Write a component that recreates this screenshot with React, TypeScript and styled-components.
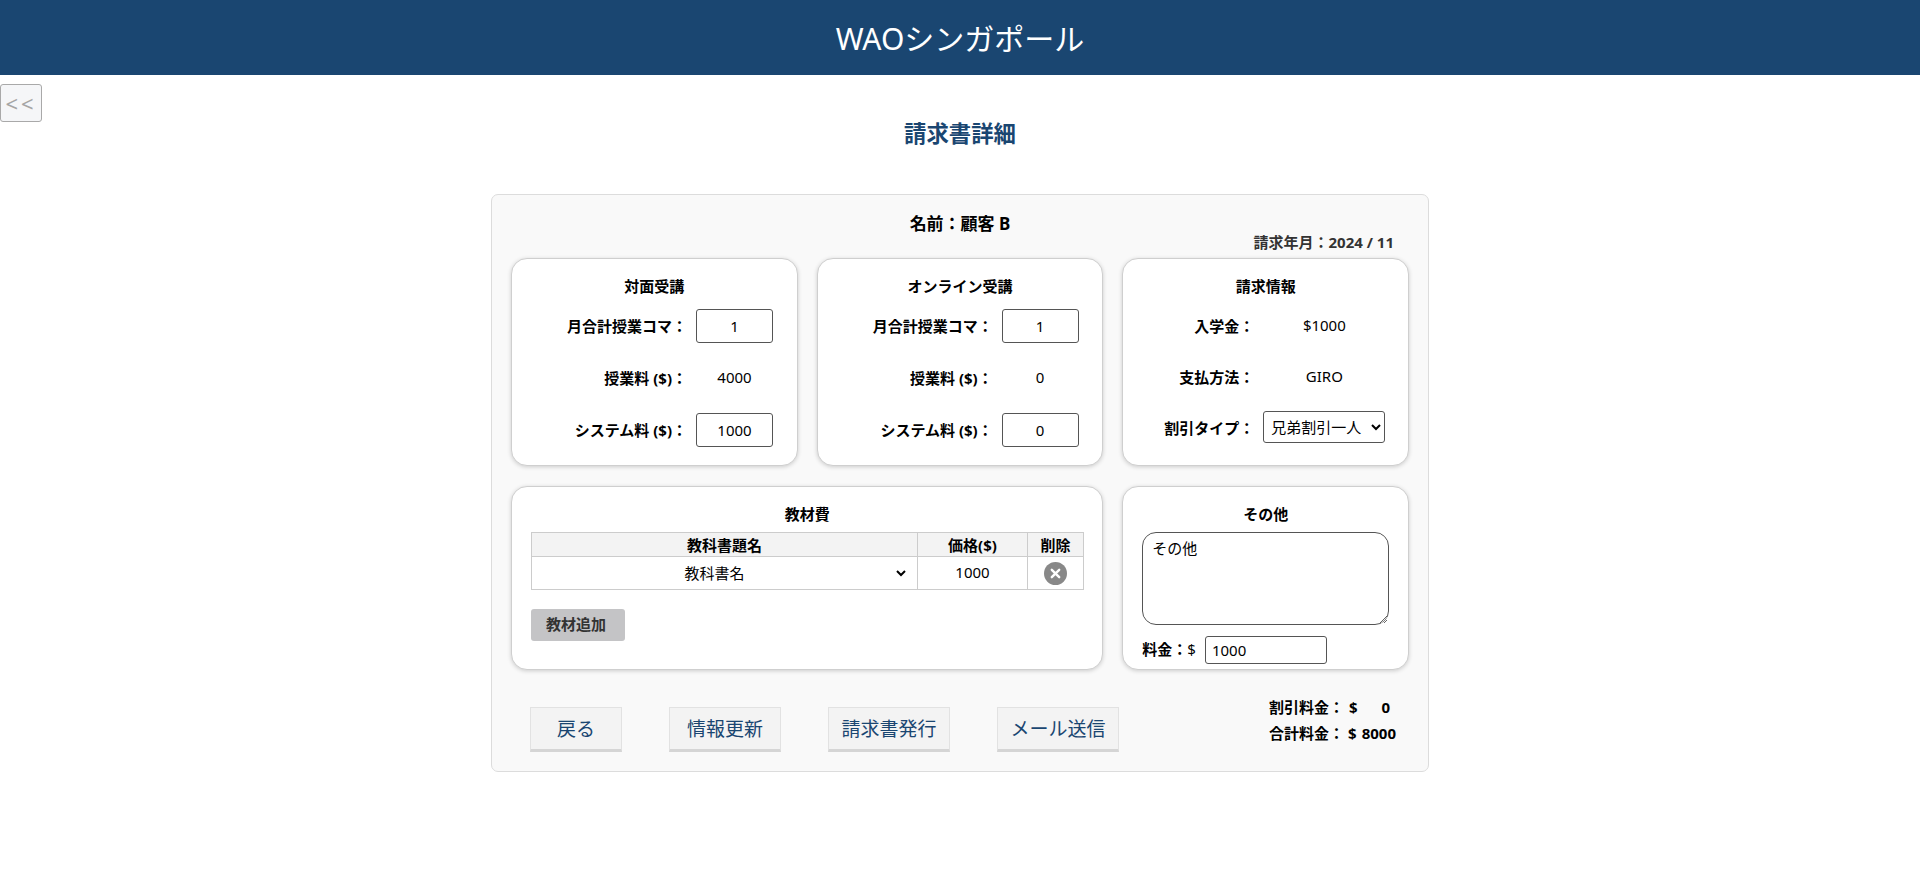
import styled, { createGlobalStyle } from 'styled-components';

const GlobalStyle = createGlobalStyle`
  * {
    box-sizing: border-box;
  }
  body {
    margin: 0;
    background: #fff;
    color: #000;
    font-family: "Noto Sans", "Noto Sans CJK JP", sans-serif;
    font-size: 15px;
  }
  input, select, textarea, button {
    font-family: "Noto Sans", "Noto Sans CJK JP", sans-serif;
  }
`;

const Header = styled.header`
  height: 75px;
  background: #1a4671;
  color: #fff;
  font-size: 30px;
  line-height: 77px;
  text-align: center;
`;

const BackButton = styled.button`
  display: block;
  width: 42px;
  height: 38px;
  margin-top: 9px;
  padding: 0;
  background: #f5f6f8;
  border: 1px solid #a9a9a9;
  border-radius: 3px;
  color: #a5a5a5;
  font-size: 22px;
  letter-spacing: 3px;
`;

const PageTitle = styled.h1`
  margin: 0 0 48px;
  color: #1a4671;
  font-size: 22.4px;
  font-weight: 700;
  line-height: 24px;
  text-align: center;
`;

const Panel = styled.section`
  width: 938px;
  margin: 0 auto;
  padding: 20px 19px 19px;
  background: #f9f9f9;
  border: 1px solid #dcdcdc;
  border-radius: 7px;
`;

const CustomerName = styled.div`
  font-size: 17px;
  font-weight: 700;
  line-height: 18px;
  text-align: center;
`;

const BillingMonth = styled.div`
  margin-bottom: 7px;
  padding-right: 15px;
  color: #333;
  font-weight: 700;
  line-height: 18px;
  text-align: right;
`;

const CardGrid = styled.div`
  display: grid;
  grid-template-columns: repeat(3, minmax(0, 1fr));
  grid-auto-rows: 208px 184px;
  gap: 20px 19px;
`;

const Card = styled.div<{ $span?: number }>`
  grid-column: span ${(p) => p.$span ?? 1};
  padding: 17px 19px 0;
  background: #fff;
  border: 1px solid #cfcfcf;
  border-radius: 16px;
  box-shadow: 0 1px 4px rgba(0, 0, 0, 0.18);
`;

const CardTitle = styled.h3<{ $gap: number }>`
  margin: 0 0 ${(p) => p.$gap}px;
  font-size: 15px;
  font-weight: 700;
  line-height: 20px;
  text-align: center;
`;

const FieldList = styled.div<{ $gap: number }>`
  display: flex;
  flex-direction: column;
  gap: ${(p) => p.$gap}px;
`;

const Field = styled.div<{ $labelWidth: number; $controlWidth: number }>`
  display: grid;
  grid-template-columns: ${(p) => p.$labelWidth}px ${(p) => p.$controlWidth}px;
  column-gap: 9px;
  align-items: center;
  height: 34px;
`;

const FieldLabel = styled.label`
  padding-bottom: 2px;
  font-weight: 700;
  text-align: right;
  white-space: nowrap;
`;

const FieldValue = styled.span`
  padding-bottom: 2px;
  text-align: center;
`;

const NumberInput = styled.input`
  width: 100%;
  height: 34px;
  padding: 0 4px;
  background: #fff;
  border: 1px solid #555;
  border-radius: 3px;
  color: #000;
  font-size: 15px;
  text-align: center;
`;

const DiscountSelect = styled.select`
  width: 122px;
  height: 32px;
  margin-bottom: 2px;
  padding: 0 2px 0 3px;
  background: #fff;
  border: 1px solid #555;
  border-radius: 3px;
  color: #000;
  font-size: 15px;
`;

const BookTable = styled.table`
  width: 552px;
  border-collapse: collapse;
  table-layout: fixed;
  line-height: 20px;

  th,
  td {
    padding: 0;
    border: 1px solid #ccc;
    text-align: center;
  }
  th {
    height: 24px;
    background: #f3f3f3;
    font-size: 15px;
    font-weight: 700;
  }
  td {
    height: 33px;
  }
  td.price {
    padding-bottom: 3px;
  }
`;

const BookSelect = styled.select`
  display: block;
  width: calc(100% - 8px);
  height: 30px;
  padding: 0;
  background: #fff;
  border: none;
  color: #000;
  font-size: 15px;
  text-align: center;
`;

const DeleteIcon = styled.svg`
  display: block;
  width: 23px;
  height: 23px;
  margin: 1px auto 0;
`;

const AddButton = styled.button`
  display: block;
  width: 94px;
  height: 32px;
  margin-top: 19px;
  padding: 0 0 3px 15px;
  background: #c4c4c6;
  border: none;
  border-radius: 3px;
  color: #333;
  font-size: 15px;
  font-weight: 700;
  text-align: left;
`;

const NoteArea = styled.textarea`
  display: block;
  width: 247px;
  height: 93px;
  margin: 0 0 11px;
  padding: 5px 9px;
  background: #fff;
  border: 1px solid #555;
  border-radius: 14px;
  color: #000;
  font-size: 15px;
  line-height: 20px;
`;

const FeeRow = styled.div`
  display: flex;
  align-items: center;
  gap: 9px;
  line-height: 20px;
`;

const FeeLabel = styled.label`
  padding-bottom: 3px;
  font-weight: 700;

  span {
    font-weight: 400;
  }
`;

const FeeInput = styled.input`
  width: 122px;
  height: 28px;
  padding: 0 6px;
  background: #fff;
  border: 1px solid #555;
  border-radius: 3px;
  color: #000;
  font-size: 15px;
`;

const Footer = styled.div`
  display: flex;
  justify-content: space-between;
  align-items: flex-start;
  margin-top: 27px;
  padding: 0 13px 0 19px;
`;

const Actions = styled.div`
  display: flex;
  gap: 47px;
  margin-top: 10px;
`;

const ActionButton = styled.button<{ $width: number }>`
  width: ${(p) => p.$width}px;
  height: 45px;
  padding: 0 0 2px;
  background: #f3f3f3;
  border: 1px solid #e2e2e2;
  border-bottom: 3px solid #d5d5d5;
  color: #1a4671;
  font-size: 19px;
`;

const Totals = styled.div`
  display: flex;
  flex-direction: column;
  gap: 6px;
  font-weight: 700;
  line-height: 20px;
`;

const TotalRow = styled.div`
  display: flex;
  width: 127px;
`;

const TotalLabel = styled.span`
  width: 80px;
  white-space: nowrap;
`;

const TotalAmount = styled.span<{ $indent: number }>`
  margin-left: ${(p) => p.$indent}px;
`;

const App = () => {
  return (
    <>
      <GlobalStyle />
      <Header>WAOシンガポール</Header>
      <BackButton>&lt;&lt;</BackButton>
      <PageTitle>請求書詳細</PageTitle>
      <Panel>
        <CustomerName>名前：顧客 B</CustomerName>
        <BillingMonth>請求年月：2024 / 11</BillingMonth>
        <CardGrid>
          <Card>
            <CardTitle $gap={13}>対面受講</CardTitle>
            <FieldList $gap={18}>
              <Field $labelWidth={156} $controlWidth={77}>
                <FieldLabel>月合計授業コマ：</FieldLabel>
                <NumberInput defaultValue="1" />
              </Field>
              <Field $labelWidth={156} $controlWidth={77}>
                <FieldLabel>授業料 ($)：</FieldLabel>
                <FieldValue>4000</FieldValue>
              </Field>
              <Field $labelWidth={156} $controlWidth={77}>
                <FieldLabel>システム料 ($)：</FieldLabel>
                <NumberInput defaultValue="1000" />
              </Field>
            </FieldList>
          </Card>
          <Card>
            <CardTitle $gap={13}>オンライン受講</CardTitle>
            <FieldList $gap={18}>
              <Field $labelWidth={156} $controlWidth={77}>
                <FieldLabel>月合計授業コマ：</FieldLabel>
                <NumberInput defaultValue="1" />
              </Field>
              <Field $labelWidth={156} $controlWidth={77}>
                <FieldLabel>授業料 ($)：</FieldLabel>
                <FieldValue>0</FieldValue>
              </Field>
              <Field $labelWidth={156} $controlWidth={77}>
                <FieldLabel>システム料 ($)：</FieldLabel>
                <NumberInput defaultValue="0" />
              </Field>
            </FieldList>
          </Card>
          <Card>
            <CardTitle $gap={13}>請求情報</CardTitle>
            <FieldList $gap={17}>
              <Field $labelWidth={112} $controlWidth={122}>
                <FieldLabel>入学金：</FieldLabel>
                <FieldValue>$1000</FieldValue>
              </Field>
              <Field $labelWidth={112} $controlWidth={122}>
                <FieldLabel>支払方法：</FieldLabel>
                <FieldValue>GIRO</FieldValue>
              </Field>
              <Field $labelWidth={112} $controlWidth={122}>
                <FieldLabel>割引タイプ：</FieldLabel>
                <DiscountSelect defaultValue="one">
                  <option value="none">なし</option>
                  <option value="one">兄弟割引一人</option>
                </DiscountSelect>
              </Field>
            </FieldList>
          </Card>
          <Card $span={2}>
            <CardTitle $gap={8}>教材費</CardTitle>
            <BookTable>
              <colgroup>
                <col style={{ width: 386 }} />
                <col style={{ width: 110 }} />
                <col style={{ width: 56 }} />
              </colgroup>
              <thead>
                <tr>
                  <th>教科書題名</th>
                  <th>価格($)</th>
                  <th>削除</th>
                </tr>
              </thead>
              <tbody>
                <tr>
                  <td>
                    <BookSelect>
                      <option>教科書名</option>
                    </BookSelect>
                  </td>
                  <td className="price">1000</td>
                  <td>
                    <DeleteIcon viewBox="0 0 23 23">
                      <circle cx="11.5" cy="11.5" r="11.5" fill="#888" />
                      <path
                        d="M7.8 7.8l7.4 7.4M15.2 7.8l-7.4 7.4"
                        stroke="#fff"
                        strokeWidth="2.4"
                        strokeLinecap="round"
                      />
                    </DeleteIcon>
                  </td>
                </tr>
              </tbody>
            </BookTable>
            <AddButton>教材追加</AddButton>
          </Card>
          <Card>
            <CardTitle $gap={8}>その他</CardTitle>
            <NoteArea defaultValue="その他" />
            <FeeRow>
              <FeeLabel>
                料金：<span>$</span>
              </FeeLabel>
              <FeeInput defaultValue="1000" />
            </FeeRow>
          </Card>
        </CardGrid>
        <Footer>
          <Actions>
            <ActionButton $width={92}>戻る</ActionButton>
            <ActionButton $width={112}>情報更新</ActionButton>
            <ActionButton $width={122}>請求書発行</ActionButton>
            <ActionButton $width={122}>メール送信</ActionButton>
          </Actions>
          <Totals>
            <TotalRow>
              <TotalLabel>割引料金：</TotalLabel>$
              <TotalAmount $indent={24}>0</TotalAmount>
            </TotalRow>
            <TotalRow>
              <TotalLabel>合計料金：</TotalLabel>$
              <TotalAmount $indent={5}>8000</TotalAmount>
            </TotalRow>
          </Totals>
        </Footer>
      </Panel>
    </>
  );
};

export default App;
